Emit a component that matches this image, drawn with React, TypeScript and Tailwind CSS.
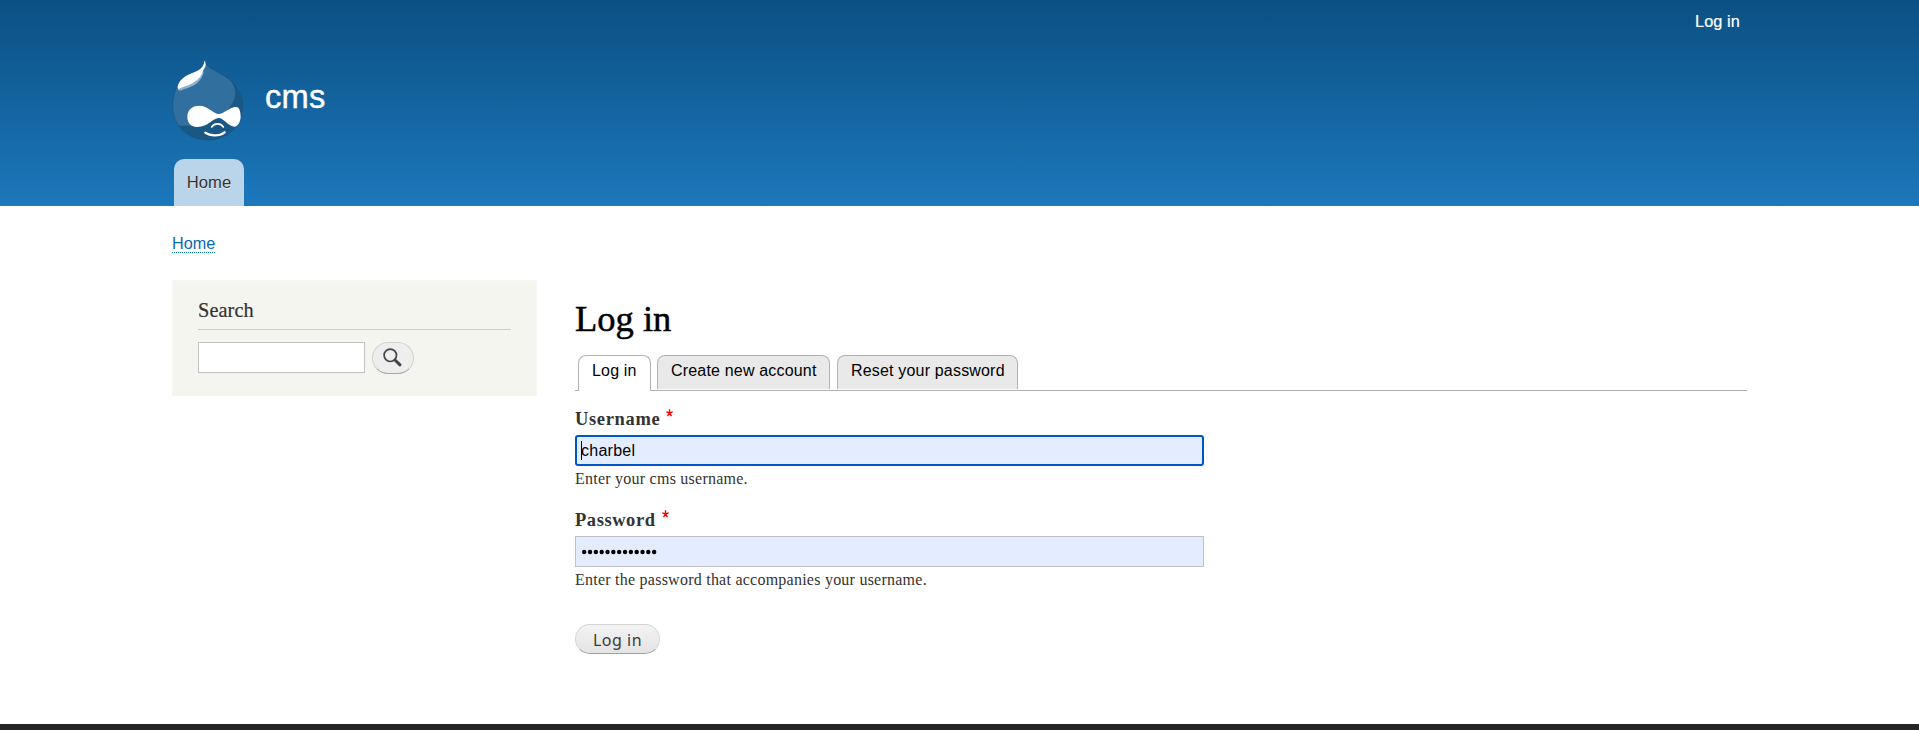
import React from "react";

const sans = "font-['Liberation_Sans',sans-serif]";
const serif = "font-['Liberation_Serif',serif]";

function DropletLogo() {
  return (
    <svg className="block h-[82px] w-[73px] shrink-0" viewBox="3 6 219 246" aria-hidden="true">
      <path d="M105 9c3 12 12 20 27 28 20 11 40 19 58 39 20 22 28 45 28 71 0 55-45 99-105 99S8 202 8 147c0-36 10-66 34-88 26-20 61-20 63-50z" fill="#195785" />
      <path d="M105 9c3 12 12 20 27 28 16 9 34 18 50 31 14 18 18 40 9 60-13 30-38 44-68 60-26 13-60 17-90 15l-8-1C13 187 8 167 8 147c0-36 10-66 34-88 26-20 61-20 63-50z" fill="#316f9f" />
      <path d="M105 9c3 12 12 20 27 28 20 11 40 19 58 39 20 22 28 45 28 71 0 55-45 99-105 99S8 202 8 147c0-36 10-66 34-88 26-20 61-20 63-50z" fill="none" stroke="#1c5380" strokeWidth="2" />
      <path d="M23 92c1 5 5 7 10 5 13-6 31-9 46-20 13-10 20-23 23-37L85 55z" fill="#8cb2d1" />
      <path d="M103 9c3 0 4 6 4 12 0 8-6 11-8 18-5 17-16 27-32 37-14 9-29 10-41 17-4-2-4-8-1-14 8-16 21-26 40-33 21-8 37-17 38-37z" fill="#fff" />
      <path d="M87 143c27 0 45 25 59 25 15 0 33-21 52-21 11 0 14 15 14 30-1 16-9 29-19 29-16 0-33-26-47-26-17 0-33 27-63 27-20 0-31-13-31-31 0-20 15-33 35-33z" fill="#fff" />
      <path d="M125 207c7-12 28-13 35 0" fill="none" stroke="#fff" strokeWidth="5" strokeLinecap="round" />
      <path d="M106 224c15 11 42 11 58-1" fill="none" stroke="#fff" strokeWidth="7" strokeLinecap="round" />
    </svg>
  );
}

function Header() {
  return (
    <header className="flex h-[206px] flex-col bg-linear-to-b from-[#0b5083] to-[#1c78bc] pl-[171px]">
      <div className="flex h-[60px] justify-end pt-[9px] pr-[179px]">
        <a className="h-6 text-[16.3px] leading-6 tracking-[0.1px] text-white [-webkit-text-stroke:0.2px_white]">Log in</a>
      </div>
      <div className="flex h-[99px] items-start">
        <DropletLogo />
        <span className="ml-[21px] pt-[17px] text-[32.7px] leading-10 tracking-[0.2px] text-white [-webkit-text-stroke:0.4px_white]">cms</span>
      </div>
      <nav className="flex h-[47px] pl-[3px]">
        <a className="flex h-full w-[70px] justify-center rounded-t-[10px] bg-[#bad5e9] pt-[12px] text-[16.6px] leading-6 text-[#333] [text-shadow:0_1px_0_#eee]">
          Home
        </a>
      </nav>
    </header>
  );
}

function SearchBlock() {
  return (
    <aside className="h-[116px] w-[365px] shrink-0 border border-[#f6f7f2] bg-[#f4f5ee] px-[25px] pt-[17px]">
      <h2 className="h-[32px] border-b border-[#cccfc9] text-[20.3px] leading-6 tracking-[0.1px] text-[#333] [-webkit-text-stroke:0.2px_#333]">Search</h2>
      <div className="mt-[12px] flex">
        <div className="h-[31px] w-[167px] border border-[#c3c3c3] bg-white" />
        <button className="ml-[7px] flex h-[32px] w-[42px] items-start justify-center rounded-full border border-[#d2d2d2] border-b-[#a8a8a8] bg-[#eee] pt-[5px]">
          <svg className="block h-5 w-5" viewBox="0 0 20 20" fill="none" stroke="#454545" aria-label="Search">
            <circle cx="7.3" cy="7.3" r="6.2" strokeWidth="1.7" />
            <path d="M12 12l5 4.8" strokeWidth="3" strokeLinecap="round" />
          </svg>
        </button>
      </div>
    </aside>
  );
}

function Tabs() {
  return (
    <div className="flex h-[36px] w-[1172px] items-start border-b border-[#b0b0b0] pl-[3px] text-[16px] leading-6 tracking-[0.18px] text-black">
      <a className="z-10 h-[36px] w-[73px] rounded-t-[8px] border border-b-0 border-[#b3b3b3] bg-white pt-[3px] pl-[13px] whitespace-nowrap">Log in</a>
      <a className="ml-[6px] h-[34px] w-[173px] rounded-t-[8px] border border-b-0 border-[#b3b3b3] bg-[#e9e9e9] pt-[3px] pl-[13px] whitespace-nowrap">Create new account</a>
      <a className="ml-[7px] h-[34px] w-[181px] rounded-t-[8px] border border-b-0 border-[#b3b3b3] bg-[#e9e9e9] pt-[3px] pl-[13px] whitespace-nowrap">Reset your password</a>
    </div>
  );
}

function Required() {
  return (
    <svg className="mt-[2px] ml-[6px] h-2 w-[7px]" viewBox="0 0 7 8" stroke="#f00" strokeWidth="1.4" aria-hidden="true">
      <path d="M3.5 0.2v3.8M0.3 2.8l3.2 1.2 3.2-1.2M1.5 7.1l2-3.1 2 3.1" fill="none" />
    </svg>
  );
}

function PasswordDots() {
  return (
    <svg className="block h-[6px] w-[76px]" viewBox="0 0 76 6" aria-hidden="true">
      {Array.from({ length: 13 }, (_, i) => (
        <circle key={i} cx={2.2 + i * 5.83} cy="3" r="2.2" fill="#000" />
      ))}
    </svg>
  );
}

function LoginForm() {
  return (
    <div className={`flex flex-col text-[#333] ${serif}`}>
      <label className="mt-[16px] flex h-[28px] text-[18.5px] leading-6 font-bold">
        <span className="tracking-[0.65px]">Username</span>
        <Required />
      </label>
      <div className={`flex h-[31px] w-[629px] rounded-[3px] border-2 border-[#0056c8] bg-[#e4edff] pl-[4px] text-black ${sans}`}>
        <span className="mt-[4px] h-[19px] w-px bg-black" />
        <span className="-ml-[1px] pt-[2px] text-[16px] leading-6 tracking-[0.25px]">charbel</span>
      </div>
      <p className="mt-[1px] h-[25px] text-[16px] leading-6 whitespace-nowrap tracking-[0.24px]">Enter your cms username.</p>
      <label className="mt-[16px] flex h-[28px] text-[18.5px] leading-6 font-bold">
        <span className="tracking-[0.56px]">Password</span>
        <Required />
      </label>
      <div className="flex h-[31px] w-[629px] items-center border border-[#c0c2c6] bg-[#e4edff] pl-[6px]">
        <PasswordDots />
      </div>
      <p className="mt-[1px] h-[25px] text-[16px] leading-6 whitespace-nowrap tracking-[0.24px]">Enter the password that accompanies your username.</p>
      <button className="mt-[31px] h-[30px] w-[85px] rounded-full border border-[#d4d4d4] border-b-[#a0a0a0] bg-linear-to-b from-[#f3f3f3] to-[#e4e4e4] pt-[1px] font-['Noto_Sans',sans-serif] text-[16px] leading-6 tracking-[0.5px] text-[#3a3a3a]">
        Log in
      </button>
    </div>
  );
}

export default function App() {
  return (
    <div className={`flex h-[730px] w-full flex-col overflow-hidden bg-white ${sans}`}>
      <Header />
      <div className="h-[74px] pt-[25px] pl-[172px]">
        <a className="inline-block h-[22px] border-b border-dotted border-[#0071b3] text-[16.2px] leading-6 text-[#0a69ae]">Home</a>
      </div>
      <main className={`flex h-[444px] items-start pl-[172px] ${serif}`}>
        <SearchBlock />
        <section className="ml-[38px]">
          <h1 className="h-[75px] pt-[19px] text-[36.5px] leading-10 text-black [-webkit-text-stroke:0.5px_black]">Log in</h1>
          <div className={sans}>
            <Tabs />
          </div>
          <LoginForm />
        </section>
      </main>
      <footer className="h-[6px] bg-[#252525]" />
    </div>
  );
}
